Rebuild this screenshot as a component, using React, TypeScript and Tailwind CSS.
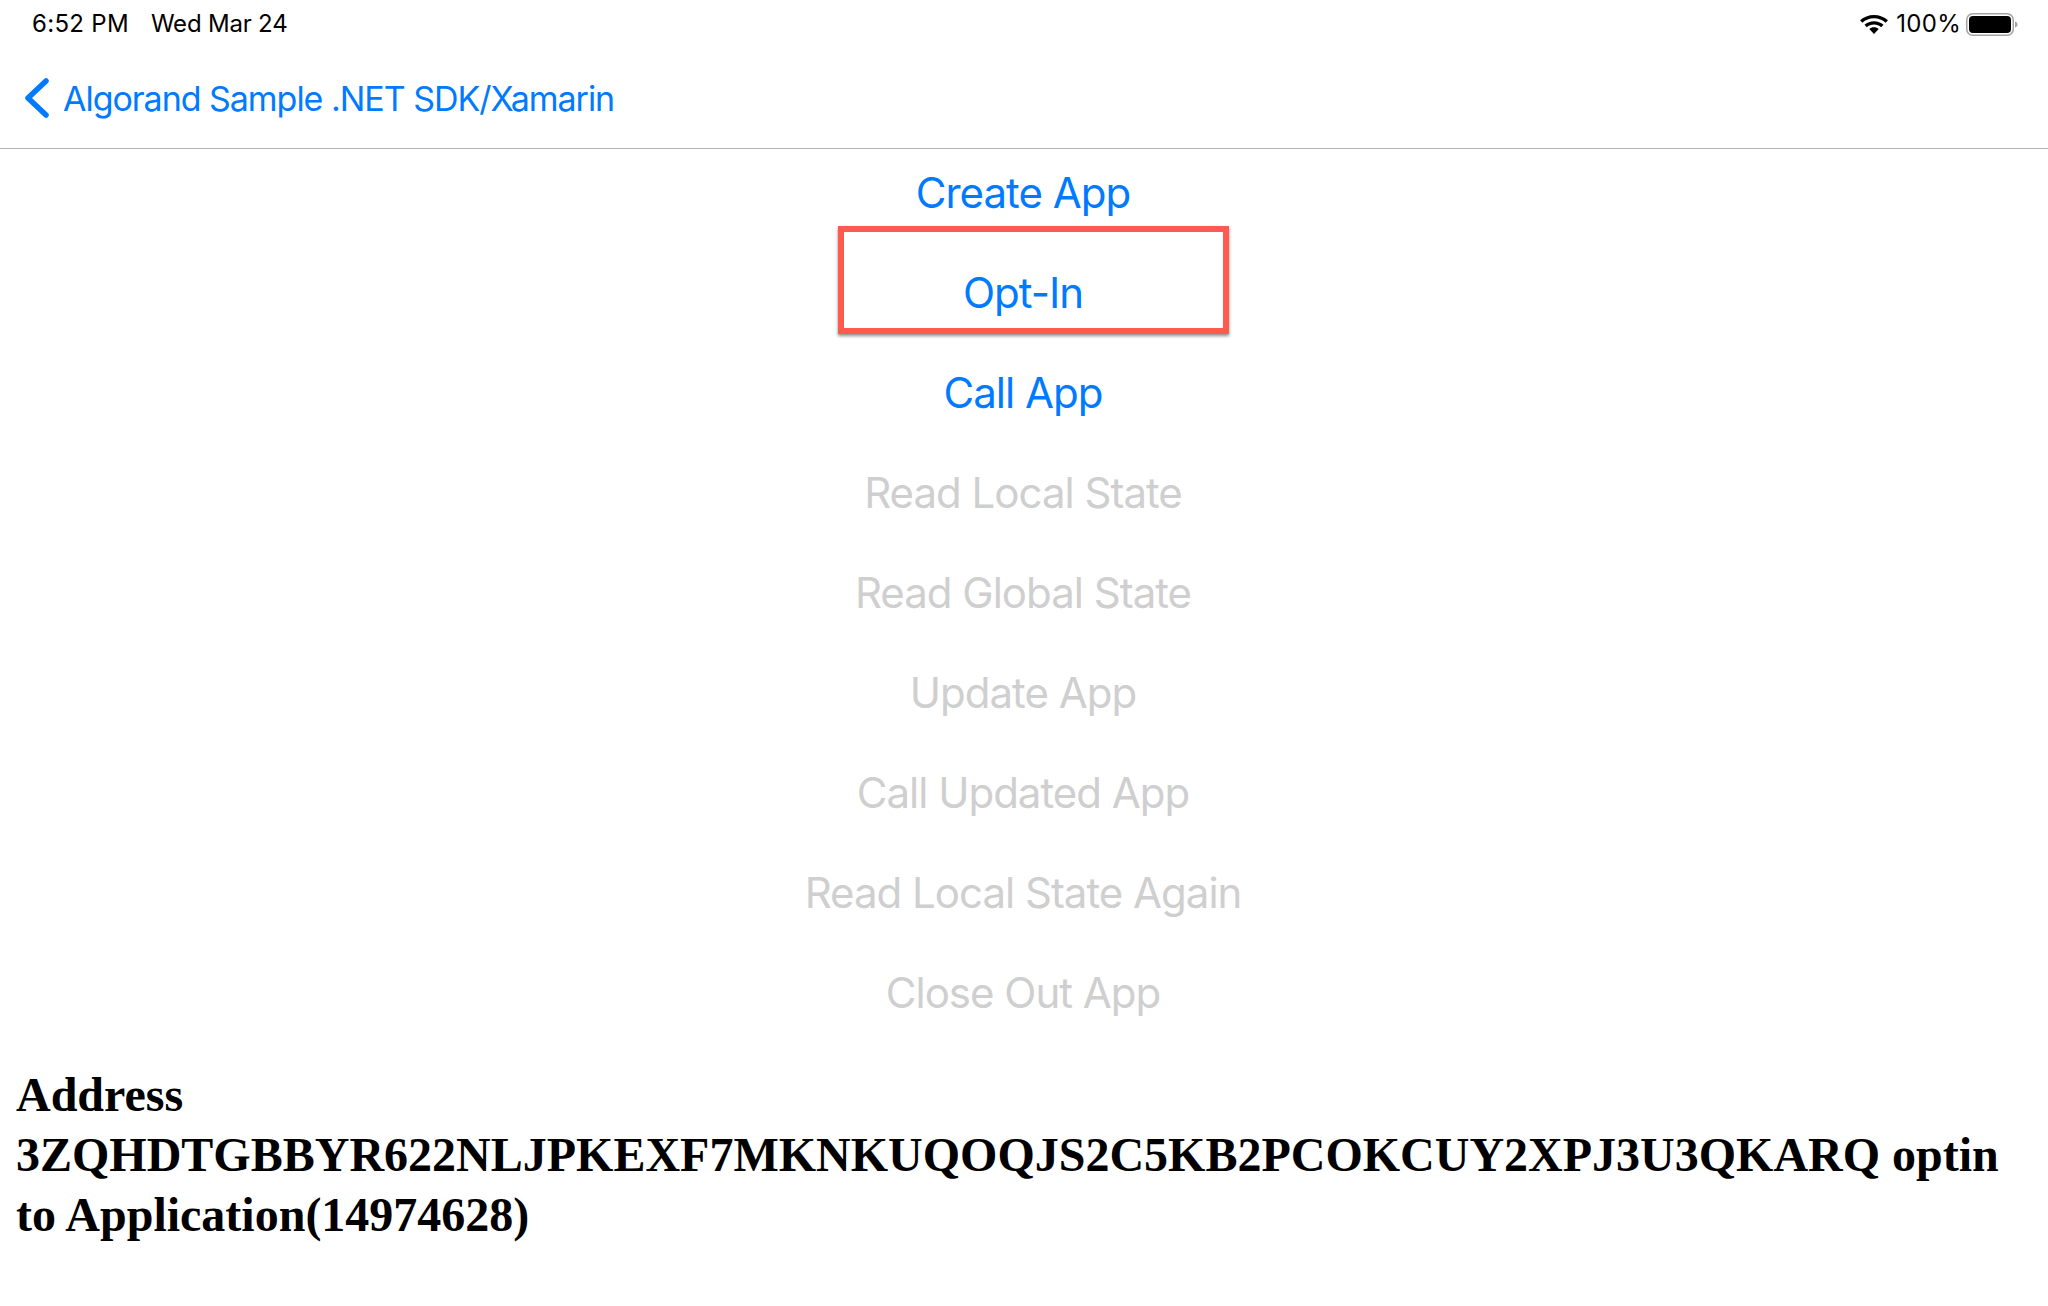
import React from 'react';

const ACTIONS = [
  { label: 'Create App', enabled: true },
  { label: 'Opt-In', enabled: true, highlighted: true },
  { label: 'Call App', enabled: true },
  { label: 'Read Local State', enabled: false },
  { label: 'Read Global State', enabled: false },
  { label: 'Update App', enabled: false },
  { label: 'Call Updated App', enabled: false },
  { label: 'Read Local State Again', enabled: false },
  { label: 'Close Out App', enabled: false },
];

const App: React.FC = () => {
  return (
    <div className="h-[1306px] w-[2048px] overflow-hidden bg-white font-['Inter',sans-serif]">
      {/* Status bar */}
      <div className="flex h-[48px] items-center justify-between pl-[32px] pr-[30px] text-[24px] text-black">
        <div className="flex gap-[22px]">
          <span className="tracking-[0.3px]">6:52 PM</span>
          <span className="tracking-[-0.2px]">Wed Mar 24</span>
        </div>
        <div className="flex items-center">
          <svg width="28" height="19" viewBox="1.5 1 25 17" fill="black" className="mr-[8px]">
            <path d="M14 4C18 4 21.6 5.5 24.4 8L26.5 5.8C23.2 2.8 18.8 1 14 1S4.8 2.8 1.5 5.8L3.6 8C6.4 5.5 10 4 14 4Z" />
            <path d="M14 9.5C16.5 9.5 18.7 10.4 20.4 11.9L22.5 9.7C20.2 7.7 17.2 6.5 14 6.5S7.8 7.7 5.5 9.7L7.6 11.9C9.3 10.4 11.5 9.5 14 9.5Z" />
            <path d="M14 12C12.4 12 11 12.6 9.8 13.6L14 18L18.2 13.6C17 12.6 15.6 12 14 12Z" />
          </svg>
          <span className="mr-[5px] tracking-[0.3px]">100%</span>
          <svg width="52" height="23" viewBox="0 0 52 23">
            <rect x="0.75" y="0.75" width="46.5" height="21.5" rx="6" fill="none" stroke="#a3a3a3" strokeWidth="1.5" />
            <rect x="3" y="3" width="42" height="17" rx="4" fill="black" />
            <path d="M49 8.5C50.8 9 51.5 10.2 51.5 11.5C51.5 12.8 50.8 14 49 14.5Z" fill="#a3a3a3" />
          </svg>
        </div>
      </div>

      {/* Nav bar */}
      <div className="flex h-[101px] items-center gap-[12px] border-b border-[#b3b3b3] pl-[24px] text-[34px] tracking-[-1.03px] text-[#007aff]">
        <svg width="27" height="40" viewBox="0 0 27 40" fill="none" stroke="#007aff" strokeWidth="5.5" strokeLinecap="round" strokeLinejoin="round">
          <path d="M22 3L4 20L22 37" />
        </svg>
        <span>Algorand Sample .NET SDK/Xamarin</span>
      </div>

      {/* Action buttons */}
      <div className="flex flex-col items-center">
        {ACTIONS.map((action) => (
          <div
            key={action.label}
            className={`relative flex h-[100px] w-full items-center justify-center pb-[14px] pr-[2px] text-[42px] tracking-[-1px] ${action.enabled ? 'text-[#007aff]' : 'text-[#cfcfcf]'}`}
          >
            {action.label}
            {action.highlighted && (
              <div className="absolute left-[838px] top-[-23px] h-[108px] w-[391px] border-[6px] border-[#ff5a4f] shadow-[0_2px_3px_rgba(0,0,0,0.45)]" />
            )}
          </div>
        ))}
      </div>

      {/* Result text */}
      <div className="mt-[16px] px-[16px] font-['Liberation_Serif',serif] text-[48px] font-bold leading-[60px] text-black">
        Address 3ZQHDTGBBYR622NLJPKEXF7MKNKUQOQJS2C5KB2PCOKCUY2XPJ3U3QKARQ optin to Application(14974628)
      </div>
    </div>
  );
};

export default App;
